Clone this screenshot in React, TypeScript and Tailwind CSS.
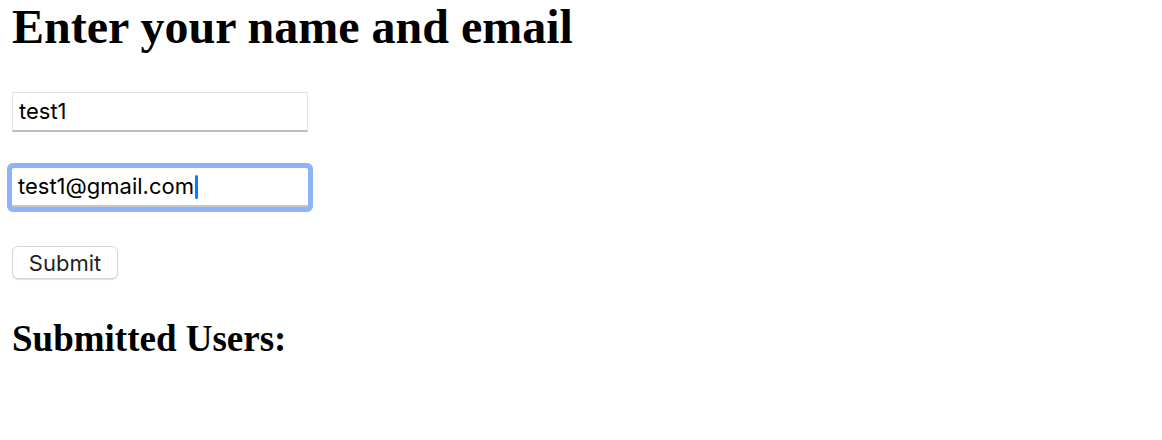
import React from "react";

const users = [
  { name: "test1", email: "test1@gmail.com" },
];

export default function App() {
  const current = users[0];

  return (
    <div className="min-h-[440px] bg-white px-3 font-['Liberation_Serif','Times_New_Roman',serif] text-black">
      <h1 className="text-[48px] font-bold leading-[53px]">
        Enter your name and email
      </h1>

      <form className="mt-[39px] flex flex-col items-start font-['Inter','Liberation_Sans',sans-serif]">
        {/* name field, idle */}
        <div className="flex h-[40px] w-[296px] items-center border border-[#e4e4e4] border-b-2 border-b-[#bdbdbd] bg-white pl-[6px] text-[22px] text-black">
          {current.name}
        </div>

        {/* email field, focused */}
        <div className="mt-[36px] flex h-[39px] w-[296px] items-center rounded-[2px] border-b-2 border-b-[#c4c4c4] bg-white pl-[6px] text-[22px] text-black shadow-[0_0_0_5px_#8db3f8]">
          <span>{current.email}</span>
          <span className="ml-[1px] h-[24px] w-[3px] rounded-sm bg-[#0a7aff]" />
        </div>

        <button
          type="button"
          className="mt-[39px] h-[33px] w-[106px] rounded-[6px] border border-[#d6d6d6] bg-white text-[22px] leading-none text-[#1f1f1f] shadow-[0_1px_1px_rgba(0,0,0,0.12)]"
        >
          Submit
        </button>
      </form>

      <h2 className="mt-[40px] text-[37px] font-bold leading-[40px]">
        Submitted Users:
      </h2>
    </div>
  );
}
